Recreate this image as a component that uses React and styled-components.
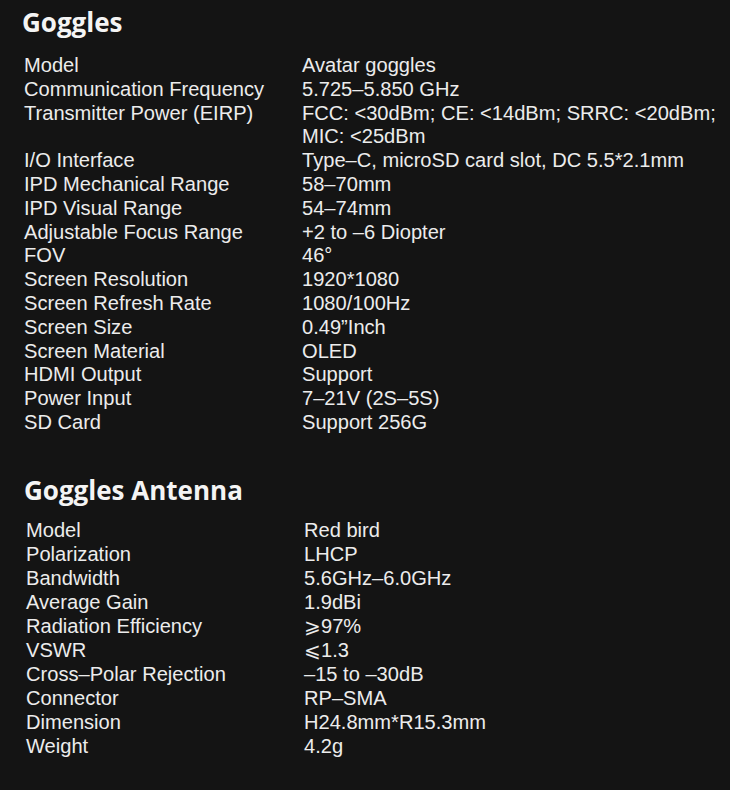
import React from "react";
import styled, { createGlobalStyle } from "styled-components";

const Global = createGlobalStyle`
  html, body { margin: 0; padding: 0; background: #141414; }
  body { font-family: "Liberation Sans", Arial, sans-serif; }
`;

const Page = styled.div`
  width: 730px;
  height: 790px;
  background: #141414;
  color: #ececec;
  box-sizing: border-box;
  padding-top: 6px;
  display: flex;
  flex-direction: column;
`;

const Section = styled.section`
  padding-left: ${(p) => p.$indent}px;
  margin-top: ${(p) => p.$top || 0}px;
`;

const Heading = styled.h2`
  margin: 0 0 ${(p) => p.$gap}px -2px;
  font-family: "Open Sans", "Noto Sans", sans-serif;
  font-weight: 700;
  font-size: 26px;
  line-height: 32px;
  color: #f4f4f4;
`;

const Table = styled.div`
  display: grid;
  grid-template-columns: 278px 424px;
  font-size: 20.1px;
  line-height: ${(p) => p.$lh}px;
`;

const Label = styled.div`
  white-space: nowrap;
`;

const Value = styled.div``;

const goggles = [
  ["Model", "Avatar goggles"],
  ["Communication Frequency", "5.725–5.850 GHz"],
  ["Transmitter Power (EIRP)", "FCC: <30dBm; CE: <14dBm; SRRC: <20dBm; MIC: <25dBm"],
  ["I/O Interface", "Type–C, microSD card slot, DC 5.5*2.1mm"],
  ["IPD Mechanical Range", "58–70mm"],
  ["IPD Visual Range", "54–74mm"],
  ["Adjustable Focus Range", "+2 to –6 Diopter"],
  ["FOV", "46°"],
  ["Screen Resolution", "1920*1080"],
  ["Screen Refresh Rate", "1080/100Hz"],
  ["Screen Size", "0.49”Inch"],
  ["Screen Material", "OLED"],
  ["HDMI Output", "Support"],
  ["Power Input", "7–21V (2S–5S)"],
  ["SD Card", "Support 256G"],
];

const antenna = [
  ["Model", "Red bird"],
  ["Polarization", "LHCP"],
  ["Bandwidth", "5.6GHz–6.0GHz"],
  ["Average Gain", "1.9dBi"],
  ["Radiation Efficiency", "⩾97%"],
  ["VSWR", "⩽1.3"],
  ["Cross–Polar Rejection", "–15 to –30dB"],
  ["Connector", "RP–SMA"],
  ["Dimension", "H24.8mm*R15.3mm"],
  ["Weight", "4.2g"],
];

function Spec({ rows, lh }) {
  return (
    <Table $lh={lh}>
      {rows.map(([k, v]) => (
        <React.Fragment key={k}>
          <Label>{k}</Label>
          <Value>{v}</Value>
        </React.Fragment>
      ))}
    </Table>
  );
}

export default function App() {
  return (
    <>
      <Global />
      <Page>
        <Section $indent={24}>
          <Heading $gap={16}>Goggles</Heading>
          <Spec rows={goggles} lh={23.8} />
        </Section>
        <Section $indent={26} $top={39}>
          <Heading $gap={12}>Goggles Antenna</Heading>
          <Spec rows={antenna} lh={24} />
        </Section>
      </Page>
    </>
  );
}
